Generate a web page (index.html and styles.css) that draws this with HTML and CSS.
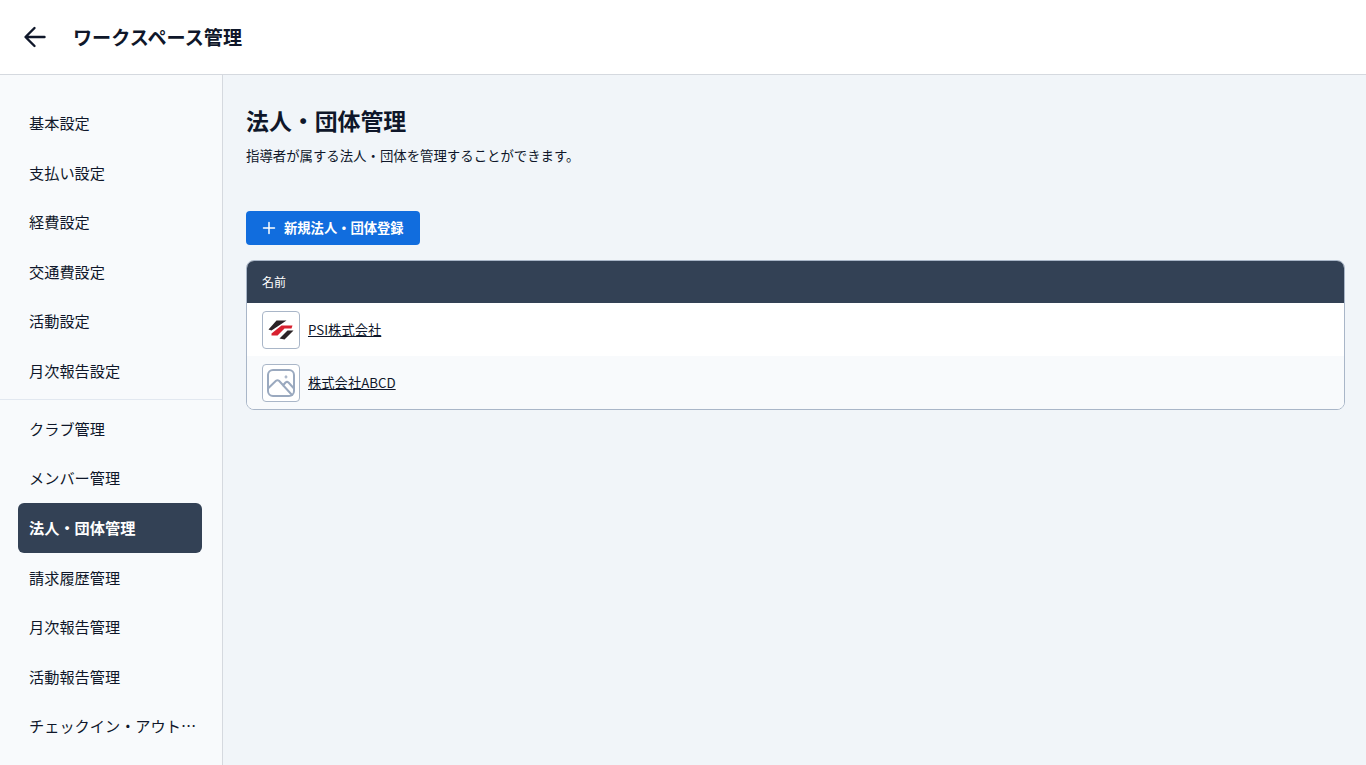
FILE: index.html
```html
<!DOCTYPE html>
<html lang="ja">
<head>
<meta charset="utf-8">
<title>法人・団体管理</title>
<link rel="stylesheet" href="styles.css">
</head>
<body>
<header class="topbar">
  <svg class="back" width="24" height="24" viewBox="0 0 24 24" fill="none" stroke="#0f172a" stroke-width="2.400" stroke-linecap="round" stroke-linejoin="round"><path d="M21.500 12H3M11.500 3l-9 9 9 9"/></svg>
  <h1 class="app-title">ワークスペース管理</h1>
</header>
<div class="layout">
  <nav class="sidebar">
    <ul class="group">
      <li class="item">基本設定</li>
      <li class="item">支払い設定</li>
      <li class="item">経費設定</li>
      <li class="item">交通費設定</li>
      <li class="item">活動設定</li>
      <li class="item">月次報告設定</li>
    </ul>
    <ul class="group second">
      <li class="item">クラブ管理</li>
      <li class="item">メンバー管理</li>
      <li class="item active">法人・団体管理</li>
      <li class="item">請求履歴管理</li>
      <li class="item">月次報告管理</li>
      <li class="item">活動報告管理</li>
      <li class="item">チェックイン・アウト管理</li>
    </ul>
  </nav>
  <main class="content">
    <h2 class="page-title">法人・団体管理</h2>
    <p class="desc">指導者が属する法人・団体を管理することができます。</p>
    <button class="primary" type="button">
      <svg width="14" height="14" viewBox="0 0 14 14" fill="none" stroke="#fff" stroke-width="1.500" stroke-linecap="round"><path d="M7 1.500v11M1.500 7h11"/></svg>
      <span>新規法人・団体登録</span>
    </button>
    <div class="table">
      <div class="thead">名前</div>
      <div class="row">
        <span class="thumb">
          <svg width="26" height="24" viewBox="0 0 26 24">
            <path fill="#2b2326" d="M.5 11.500 8.500 2.500H18.500L9.500 8.500 3.500 12.500zM11.500 20.500 19.500 12.500H25.500L16.500 21.500z"/>
            <path fill="#d8202f" d="M3.500 15.500 13.500 7.500H24.500L23.500 10.500H16.500L9.500 17.500H3.500z"/>
          </svg>
        </span>
        <a class="name">PSI株式会社</a>
      </div>
      <div class="row alt">
        <span class="thumb">
          <svg width="30" height="30" viewBox="0 0 30 30" fill="none" stroke="#9aa9bf" stroke-width="2" stroke-linecap="round" stroke-linejoin="round">
            <rect x="2" y="2" width="26" height="26" rx="5"/>
            <path d="M2.500 20 10 12.800c1-.8 2-.8 3 0L26 27M17 17.500l2.500-3c1-.8 2-.8 3 0L27.500 20"/>
            <circle cx="20" cy="9" r=".4" fill="#9aa9bf"/>
          </svg>
        </span>
        <a class="name">株式会社ABCD</a>
      </div>
    </div>
  </main>
</div>
</body>
</html>
```
FILE: styles.css
```css
* { box-sizing: border-box; }
html, body { height: 100%; }
body {
  margin: 0;
  height: 765px;
  overflow: hidden;
  display: flex;
  flex-direction: column;
  font-family: "Noto Sans CJK JP", sans-serif;
  color: #0f172a;
  background: #f1f5f9;
}
.topbar {
  height: 75px;
  flex: none;
  display: flex;
  align-items: center;
  gap: 26px;
  padding: 0 0 0 23px;
  background: #fff;
  border-bottom: 1px solid #d5d9df;
}
.back { flex: none; }
.app-title { margin: 0; font-size: 19.100px; line-height: 28px; font-weight: 700; }
.layout { flex: 1; display: flex; min-height: 0; }
.sidebar {
  width: 223px;
  flex: none;
  padding-top: 23px;
  background: #f8fafc;
  border-right: 1px solid #d5d9df;
}
.group { list-style: none; margin: 0; padding: 0 20px 3.800px 18px; }
.second { padding-top: 3.500px; border-top: 1px solid #e2e8f0; }
.item {
  height: 49.600px;
  padding: 0 2px 0 11px;
  font-size: 15.200px;
  line-height: 48px;
  color: #0f172a;
  border-radius: 6px;
  white-space: nowrap;
  overflow: hidden;
  text-overflow: ellipsis;
}
.active { background: #334155; color: #fff; font-weight: 700; }
.content { flex: 1; min-width: 0; padding: 28px 21px 0 23px; }
.page-title { margin: 0; font-size: 22.900px; line-height: 34px; font-weight: 700; }
.desc { margin: 8px 0 0; font-size: 13.400px; line-height: 20px; color: #0f172a; }
.primary {
  margin-top: 46px;
  width: 174px;
  height: 34px;
  display: flex;
  align-items: center;
  gap: 8px;
  padding: 0 0 0 16px;
  border: 0;
  border-radius: 4px;
  background: #116dde;
  color: #fff;
  font: 700 13.300px/20px "Noto Sans CJK JP", sans-serif;
}
.table {
  margin-top: 15px;
  height: 150px;
  border: 1px solid #a9b6c8;
  border-radius: 8px;
  overflow: hidden;
  background: #fff;
}
.thead {
  height: 42px;
  padding-left: 15px;
  background: #334155;
  color: #fff;
  font-size: 12px;
  line-height: 42px;
}
.row {
  height: 53px;
  display: flex;
  align-items: center;
  gap: 8px;
  padding-left: 15px;
  background: #fff;
}
.alt { background: #f8fafc; }
.thumb {
  width: 38px;
  height: 38px;
  flex: none;
  display: flex;
  align-items: center;
  justify-content: center;
  background: #fff;
  border: 1px solid #a9b6c8;
  border-radius: 4px;
}
.name { padding-top: 1px; font-size: 13.300px; line-height: 20px; color: #0f172a; text-decoration: underline; }
```
